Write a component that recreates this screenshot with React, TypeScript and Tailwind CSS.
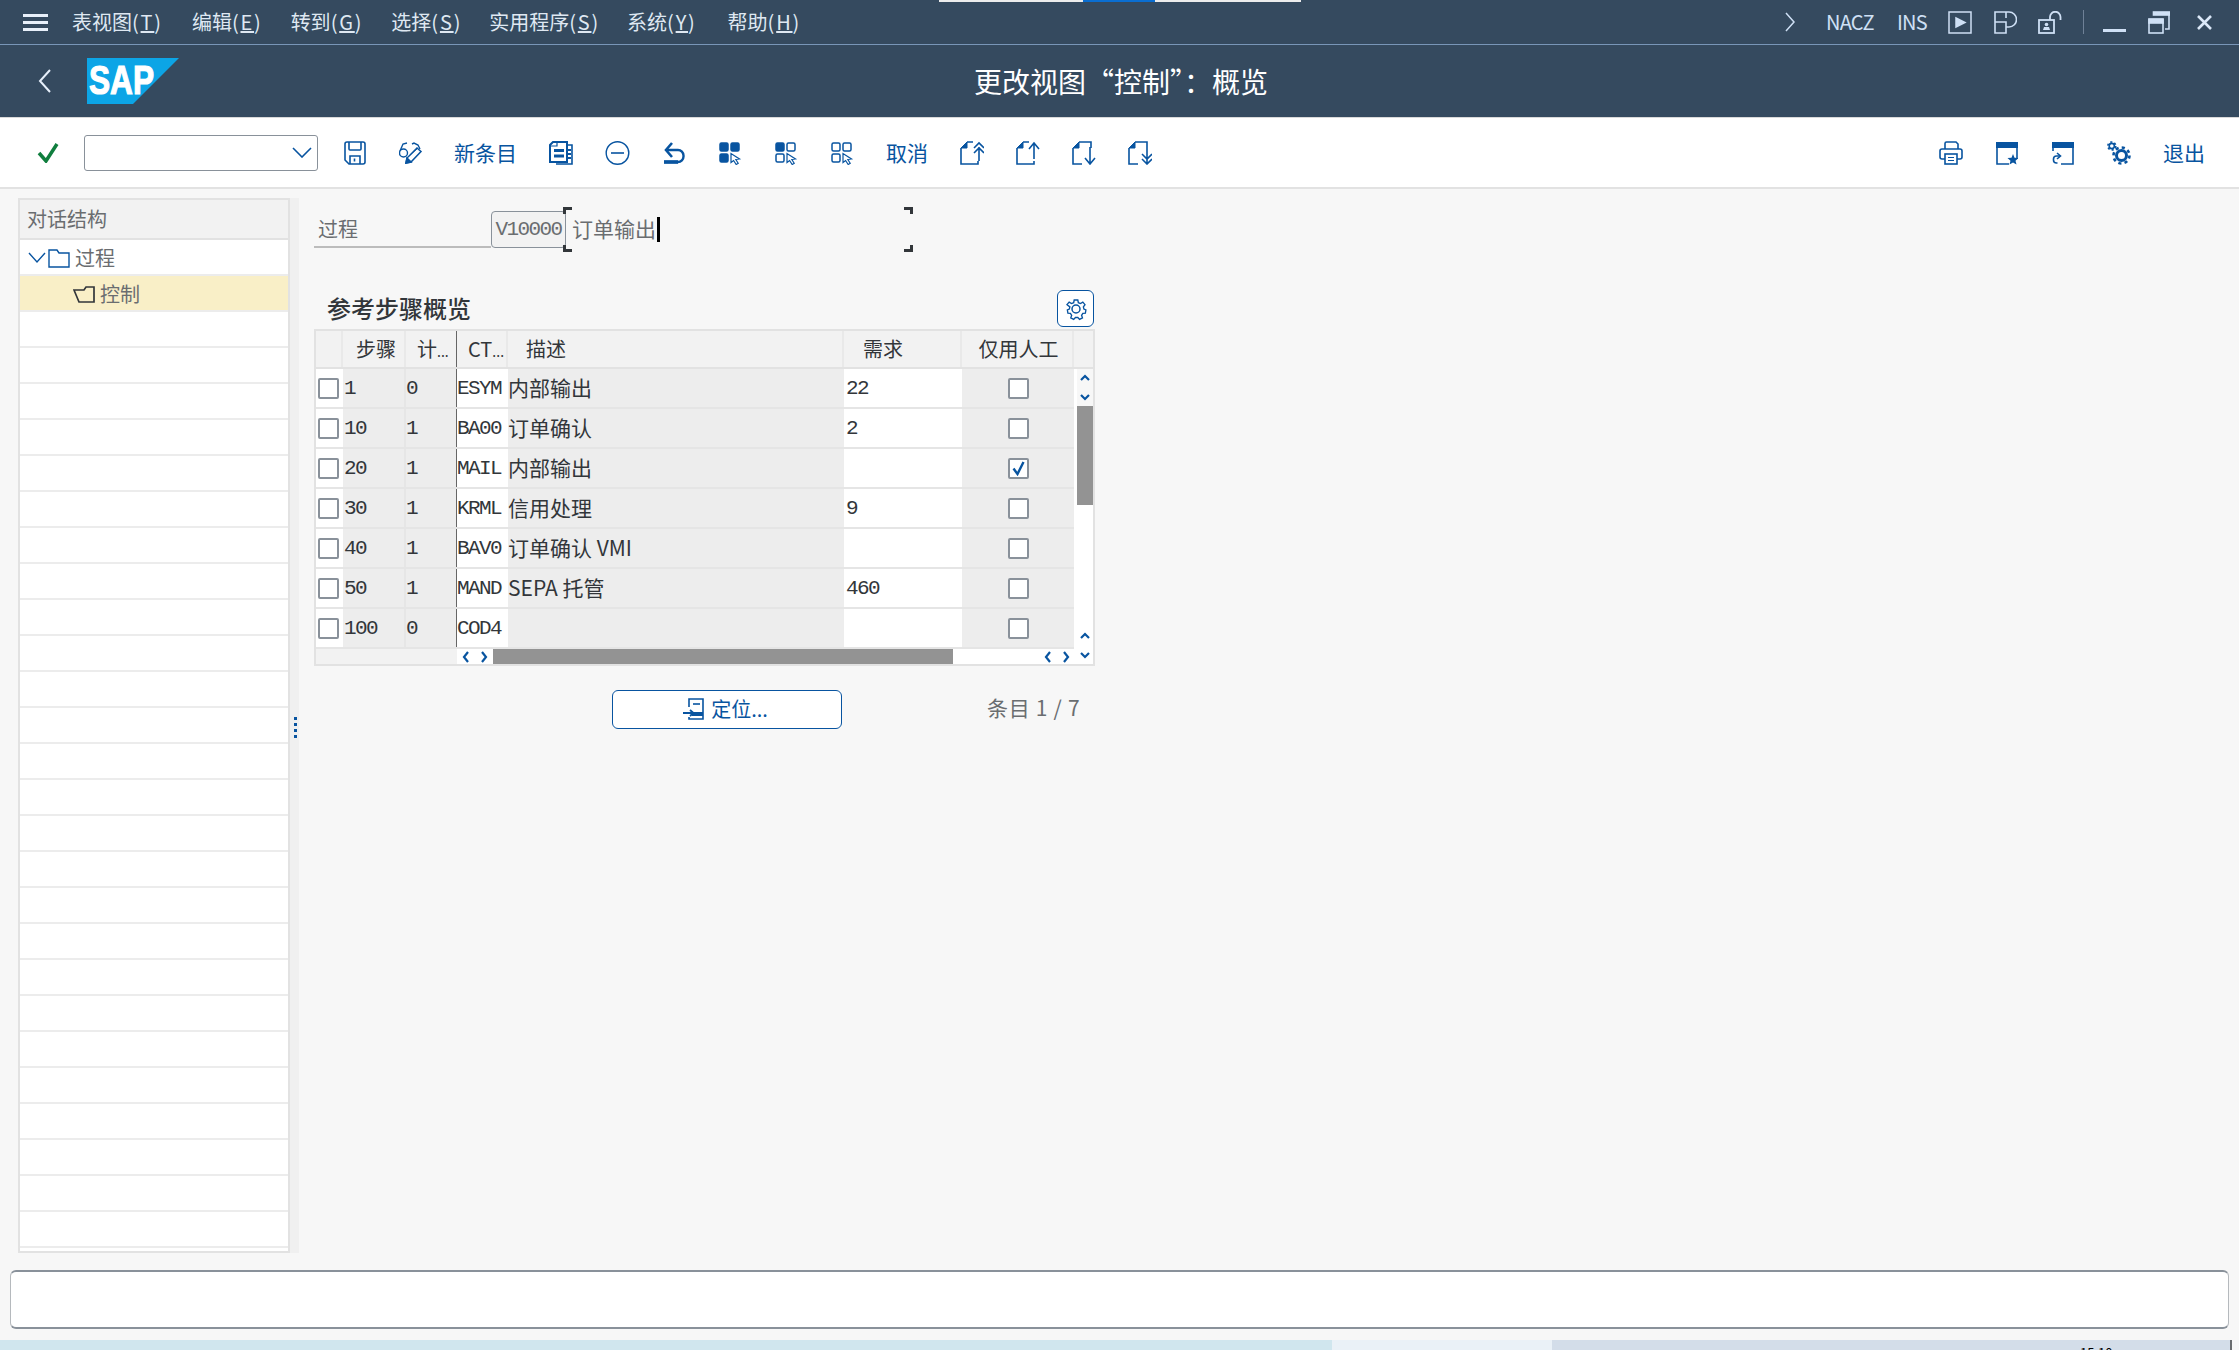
import { ReactNode } from "react";

const cjk = "font-['Noto_Sans_CJK_SC','Noto_Sans',sans-serif]";
const mono = "font-['Liberation_Mono','Noto_Sans_CJK_SC',monospace] text-[21px] tracking-[-1.6px]";

const menus = [
  { label: "表视图", key: "T", cls: "ml-[24px]" },
  { label: "编辑", key: "E", cls: "ml-[29px]" },
  { label: "转到", key: "G", cls: "ml-[28px]" },
  { label: "选择", key: "S", cls: "ml-[28px]" },
  { label: "实用程序", key: "S", cls: "ml-[27px]" },
  { label: "系统", key: "Y", cls: "ml-[27px]" },
  { label: "帮助", key: "H", cls: "ml-[31px]" },
];

const rows = [
  { step: "1", cnt: "0", ct: "ESYM", desc: "内部输出", req: "22", checked: false },
  { step: "10", cnt: "1", ct: "BA00", desc: "订单确认", req: "2", checked: false },
  { step: "20", cnt: "1", ct: "MAIL", desc: "内部输出", req: "", checked: true },
  { step: "30", cnt: "1", ct: "KRML", desc: "信用处理", req: "9", checked: false },
  { step: "40", cnt: "1", ct: "BAV0", desc: "订单确认 VMI", req: "", checked: false },
  { step: "50", cnt: "1", ct: "MAND", desc: "SEPA 托管", req: "460", checked: false },
  { step: "100", cnt: "0", ct: "COD4", desc: "", req: "", checked: false },
];

function Ico({ w = 24, h = 24, className = "", children }: { w?: number; h?: number; className?: string; children: ReactNode }) {
  return (
    <svg width={w} height={h} viewBox={`0 0 ${w} ${h}`} fill="none" stroke="#0854a0" strokeWidth="1.6" className={"shrink-0 " + className}>
      {children}
    </svg>
  );
}

function PageIcon({ kind, className }: { kind: "first" | "prev" | "next" | "last"; className: string }) {
  const up = kind === "first" || kind === "prev";
  return (
    <Ico className={className}>
      <path d="M7 1L1 7h6z" fill="#0854a0" strokeWidth="1" />
      <path d="M1 7v16h1" />
      {up ? <path d="M7 1h6M2 23h16v-3" /> : <path d="M7 1h12v6M2 23h8" />}
      {kind === "first" && <path d="M19 20V6M14 7l5-5 5 5M14 12l5-5 5 5" />}
      {kind === "prev" && <path d="M18 18V3M13 8l5-6 5 6" />}
      {kind === "next" && <path d="M18 6v16M13 17l5 6 5-6" />}
      {kind === "last" && <path d="M19 7v15M14 13l5 5 5-5M14 18l5 5 5-5" />}
    </Ico>
  );
}

function SelectIcon({ fill, className }: { fill: number; className: string }) {
  const cells = [
    [1, 2],
    [12, 2],
    [1, 13],
  ];
  return (
    <Ico w={23} className={className}>
      {cells.map(([x, y], i) => (
        <rect key={i} x={x} y={y} width="8" height="8" rx="1.5" fill={i < fill ? "#0854a0" : "none"} strokeWidth="1.5" />
      ))}
      <path d="M12 12.5v9l2.6-2 2.6 4 2-1.2-2.4-3.8 3.7-.6z" fill="#fff" strokeWidth="1.2" />
    </Ico>
  );
}

function CheckBox({ checked = false }: { checked?: boolean }) {
  return (
    <div className="flex h-[21px] w-[21px] items-center justify-center rounded-[2px] border-2 border-[#89919a] bg-white">
      {checked && (
        <svg width="15" height="15" viewBox="0 0 15 15" fill="none" stroke="#0854a0" strokeWidth="2.4">
          <path d="M2.5 7.5l4 5.5 6-12" />
        </svg>
      )}
    </div>
  );
}

function Chev({ dir, className = "" }: { dir: "up" | "down" | "left" | "right"; className?: string }) {
  const d = { up: "M2 8l4-4 4 4", down: "M2 4l4 4 4-4", left: "M8 1L4 6l4 5", right: "M4 1l4 5-4 5" }[dir];
  return (
    <svg width="12" height="12" viewBox="0 0 12 12" fill="none" stroke="#0854a0" strokeWidth="2.2" className={className}>
      <path d={d} />
    </svg>
  );
}

export default function App() {
  return (
    <div className={"relative flex h-[1350px] w-[2239px] flex-col overflow-hidden bg-[#f7f7f7] text-[#32363a] " + cjk}>
      <div className="absolute left-[939px] top-0 flex h-[2px] w-[362px]">
        <div className="w-[144px] bg-[#ececec]" />
        <div className="w-[72px] bg-[#0a6ed1]" />
        <div className="flex-1 bg-[#ececec]" />
      </div>

      {/* menu bar */}
      <div className="flex h-[45px] items-center border-b border-[#7996b8] bg-[#354a5f] pl-[23px] text-[20px] text-[#dfe8f2]">
        <svg width="25" height="17" viewBox="0 0 25 17" fill="#e8f0fa" className="shrink-0">
          <rect width="25" height="3" />
          <rect y="7" width="25" height="3" />
          <rect y="14" width="25" height="3" />
        </svg>
        {menus.map((m) => (
          <span key={m.label} className={"whitespace-nowrap " + m.cls}>
            {m.label}
            <span className="tracking-[1.8px]">
              (<u>{m.key}</u>)
            </span>
          </span>
        ))}
        <div className="ml-auto flex items-center pr-[27px] text-[#cfe0f5]">
          <svg width="12" height="20" viewBox="0 0 12 20" fill="none" stroke="#cfe0f5" strokeWidth="1.5">
            <path d="M2 1l8 9-8 9" />
          </svg>
          <span className="ml-[30px] w-[49px] text-[20px] tracking-[-0.8px]">NACZ</span>
          <span className="ml-[22px] w-[31px] text-[20px] tracking-[-0.8px]">INS</span>
          <svg width="24" height="23" viewBox="0 0 24 23" fill="none" stroke="#cfe0f5" strokeWidth="1.5" className="ml-[20px]">
            <rect x="1" y="1" width="22" height="21" />
            <path d="M8 7l9 4.5-9 4.5z" fill="#cfe0f5" />
          </svg>
          <svg width="23" height="23" viewBox="0 0 23 23" fill="none" stroke="#cfe0f5" strokeWidth="1.6" className="ml-[22px]">
            <path d="M1 1H15a7.5 7.5 0 0 1 0 15H12V22H1ZM1 11H12V16M12 1V7" />
          </svg>
          <svg width="24" height="23" viewBox="0 0 24 23" fill="none" stroke="#cfe0f5" strokeWidth="1.8" className="ml-[21px]">
            <rect x="1" y="9" width="15" height="13" />
            <path d="M12 9V6a5 5 0 0 1 10.500 0v3" />
            <circle cx="8.500" cy="13.500" r="1.800" fill="#cfe0f5" stroke="none" />
            <path d="M5 19h7l-1-3H6z" fill="#cfe0f5" stroke="none" />
          </svg>
          <div className="ml-[21px] h-[24px] w-px bg-[#6f8197]" />
          <div className="ml-[19px] mt-[17px] h-[3px] w-[23px] bg-[#cfe0f5]" />
          <svg width="22" height="23" viewBox="0 0 22 23" fill="none" stroke="#cfe0f5" strokeWidth="1.6" className="ml-[22px]">
            <rect x="1" y="8.500" width="14" height="13.500" />
            <rect x="1" y="8" width="14" height="4" fill="#cfe0f5" />
            <rect x="5.500" y="1" width="16" height="3" fill="#cfe0f5" />
            <path d="M21 4v14h-4" />
          </svg>
          <svg width="15" height="15" viewBox="0 0 15 15" fill="none" stroke="#dbe8f8" strokeWidth="2.6" className="ml-[27px]">
            <path d="M1 1l13 13M14 1L1 14" />
          </svg>
        </div>
      </div>

      {/* title bar */}
      <div className="grid h-[73px] grid-cols-[1fr_auto_1fr] items-center border-b border-[#d9d9d9] bg-[#354a5f]">
        <div className="flex items-center pl-[38px]">
          <svg width="14" height="24" viewBox="0 0 14 24" fill="none" stroke="#e6effa" strokeWidth="2">
            <path d="M12 1L2 12l10 11" />
          </svg>
          <svg width="92" height="46" viewBox="0 0 92 46" className="ml-[35px]">
            <polygon points="0,0 92,0 46,46 0,46" fill="#0ca5e6" />
            <text x="2" y="36" fill="#fff" stroke="#fff" strokeWidth="1.2" fontFamily="Liberation Sans" fontWeight="700" fontSize="40" textLength="65" lengthAdjust="spacingAndGlyphs">
              SAP
            </text>
          </svg>
        </div>
        <div className="pl-[3px] text-[28px] text-white">更改视图“控制”：概览</div>
        <div />
      </div>

      {/* toolbar */}
      <div className="flex h-[71px] items-center border-b-2 border-[#e2e2e2] bg-white pl-[37px] text-[21px] text-[#0854a0]">
        <svg width="23" height="20" viewBox="0 0 23 20" fill="none" stroke="#107e3e" strokeWidth="3.5" className="shrink-0">
          <path d="M2 10l7 8L20 1" />
        </svg>
        <div className="ml-[24px] flex h-[36px] w-[234px] items-center justify-end rounded-[3px] border border-[#89919a] bg-white pr-[5px]">
          <svg width="20" height="11" viewBox="0 0 20 11" fill="none" stroke="#0854a0" strokeWidth="1.6">
            <path d="M1 1l9 9 9-9" />
          </svg>
        </div>
        <Ico w={22} className="ml-[26px]">
          <path d="M3 1h16a2 2 0 0 1 2 2v18a2 2 0 0 1-2 2H5l-4-4V3a2 2 0 0 1 2-2z" />
          <path d="M5 1v7a1 1 0 0 0 1 1h10a1 1 0 0 0 1-1V1M6 23v-8h10v8" />
          <path d="M10.500 17.500v3" />
        </Ico>
        <Ico className="ml-[33px]">
          <circle cx="4.500" cy="12" r="4" strokeWidth="1.4" />
          <path d="M1 10l3-7 4-1M13 3l2-1 4 2 2 4" strokeWidth="1.4" />
          <path d="M7 22l1-5L18 7l4 3.500L12 21z" strokeWidth="1.5" />
          <path d="M7 22l1-5 4 4z" fill="#0854a0" />
          <path d="M10 15l9-8" strokeWidth="1" />
        </Ico>
        <span className="ml-[31px] whitespace-nowrap">新条目</span>
        <Ico className="ml-[32px]">
          <path d="M8 1H4L1 4v17h17V1z" strokeWidth="2" />
          <path d="M8 1v4H1" strokeWidth="1.2" />
          <path d="M18 4h5v19H7" strokeWidth="1.6" />
          <rect x="5" y="8" width="10" height="3" fill="#0854a0" stroke="none" />
          <rect x="5" y="13.500" width="10" height="3" fill="#0854a0" stroke="none" />
          <rect x="19" y="8" width="3" height="2" fill="#0854a0" stroke="none" />
          <rect x="19" y="12" width="3" height="2" fill="#0854a0" stroke="none" />
          <rect x="19" y="16" width="3" height="2" fill="#0854a0" stroke="none" />
        </Ico>
        <Ico w={25} className="ml-[32px]">
          <circle cx="12.500" cy="12" r="11.300" strokeWidth="1.4" />
          <path d="M6 12h13" />
        </Ico>
        <Ico w={23} className="ml-[33px]">
          <path d="M9 2L3 9l6 7" strokeWidth="2.6" />
          <path d="M3 9h12a5.500 5.500 0 0 1 5.500 5.500v1A5.500 5.500 0 0 1 15 21H1" strokeWidth="2.4" />
          <path d="M1 21h14" strokeWidth="3.6" />
        </Ico>
        <SelectIcon fill={3} className="ml-[33px]" />
        <SelectIcon fill={1} className="ml-[33px]" />
        <SelectIcon fill={0} className="ml-[33px]" />
        <span className="ml-[32px] whitespace-nowrap">取消</span>
        <PageIcon kind="first" className="ml-[32px]" />
        <PageIcon kind="prev" className="ml-[32px]" />
        <PageIcon kind="next" className="ml-[32px]" />
        <PageIcon kind="last" className="ml-[32px]" />

        <Ico className="ml-auto">
          <path d="M6 8V2.500A1.500 1.500 0 0 1 7.500 1H17l2 2v5" />
          <path d="M6 18H3a2 2 0 0 1-2-2V10a2 2 0 0 1 2-2h18a2 2 0 0 1 2 2v6a2 2 0 0 1-2 2h-3" />
          <rect x="6" y="13" width="12" height="10" />
          <path d="M9 16.500h6M9 19.500h6" strokeWidth="1.2" />
        </Ico>
        <Ico w={22} className="ml-[33px]">
          <rect x="0" y="1" width="22" height="6" fill="#0854a0" stroke="none" />
          <path d="M1 6v17h12M21 6v12" />
          <path d="M17 13l1.500 3.800 4 .3-3 2.600 1 3.900-3.500-2.100-3.500 2.100 1-3.900-3-2.600 4-.3z" fill="#0854a0" stroke="none" />
        </Ico>
        <Ico w={22} className="ml-[34px]">
          <rect x="0" y="1" width="22" height="6" fill="#0854a0" stroke="none" />
          <path d="M1 6v4M21 6v17H9" />
          <path d="M8 15H4.500a3 3 0 0 0-3 3v1a3 3 0 0 0 3 3h1" />
          <path d="M5 12l3.500 3L5 18" />
        </Ico>
        <Ico className="ml-[33px]">
          <circle cx="14.500" cy="14.500" r="5" strokeWidth="3" />
          <circle cx="14.500" cy="14.500" r="8" strokeWidth="2.600" strokeDasharray="3.140 3.140" />
          <circle cx="4.800" cy="5" r="2.600" strokeWidth="1.600" />
          <circle cx="4.800" cy="5" r="4" strokeWidth="1.600" strokeDasharray="2.100 2.100" />
        </Ico>
        <span className="ml-[32px] mr-[34px] whitespace-nowrap">退出</span>
      </div>

      {/* content */}
      <div className="flex h-[1081px] shrink-0 pl-[18px] pt-[9px] text-[20px]">
        <div className="h-[1055px] w-[272px] shrink-0 overflow-hidden border-x-2 border-b-2 border-[#e2e2e2] bg-white">
          <div className="flex h-[42px] items-center border-y-2 border-[#e2e2e2] bg-[#f2f2f2] pl-[7px] text-[#6a6d70]">对话结构</div>
          <div className="flex h-[36px] items-center border-b-2 border-[#ececec] pl-[8px] pt-[2px] text-[#6a6d70]">
            <svg width="18" height="12" viewBox="0 0 18 12" fill="none" stroke="#0854a0" strokeWidth="1.4">
              <path d="M1 1l8 9 8-9" />
            </svg>
            <svg width="22" height="19" viewBox="0 0 22 19" fill="none" stroke="#0854a0" strokeWidth="1.4" className="ml-[2px]">
              <path d="M1 1h8l2 3h10v14H1z" />
            </svg>
            <span className="ml-[5px]">过程</span>
          </div>
          <div className="flex h-[36px] items-center border-b-2 border-[#ececec] bg-[#f9efc7] pl-[53px] pt-[2px] text-[#6a6d70]">
            <svg width="22" height="18" viewBox="0 0 22 18" fill="none" stroke="#32363a" strokeWidth="1.7">
              <path d="M6 17h15V2h-8l-2 3H1zM6 17L1 5" />
            </svg>
            <span className="ml-[5px]">控制</span>
          </div>
          {Array.from({ length: 26 }, (_, i) => (
            <div key={i} className="h-[36px] border-b-2 border-[#ececec]" />
          ))}
        </div>
        <div className="relative h-[1055px] w-[9px] shrink-0 bg-[#f0f0f0]">
          <div className="absolute left-[4px] top-[519px] flex flex-col gap-[3px]">
            {[0, 1, 2, 3].map((i) => (
              <div key={i} className="h-[3px] w-[3px] bg-[#0854a0]" />
            ))}
          </div>
        </div>

        <div className="flex flex-col pl-[15px] pt-[13px]">
          <div className="relative flex h-[37px] items-stretch">
            <div className="flex w-[177px] items-center border-b-2 border-[#bcbcbc] pl-[4px] text-[#6a6d70]">过程</div>
            <div className={"flex w-[75px] items-center justify-center rounded-[4px] border border-[#89919a] bg-[#f2f2f2] pt-[1px] text-[#6a6d70] " + mono}>V10000</div>
            <div className="ml-[6px] flex items-center pb-[1px] text-[21px] text-[#6a6d70]">
              订单输出
              <div className="ml-[1px] h-[25px] w-[3px] bg-black" />
            </div>
            <div className="absolute -top-[4px] left-[249px] h-[7px] w-[9px] border-l-[3px] border-t-[3px] border-[#32363a]" />
            <div className="absolute -bottom-[4px] left-[249px] h-[7px] w-[9px] border-b-[3px] border-l-[3px] border-[#32363a]" />
            <div className="absolute -top-[4px] left-[590px] h-[7px] w-[9px] border-r-[3px] border-t-[3px] border-[#32363a]" />
            <div className="absolute -bottom-[4px] left-[590px] h-[7px] w-[9px] border-b-[3px] border-r-[3px] border-[#32363a]" />
          </div>

          <div className="mt-[42px] flex h-[37px] w-[780px] items-center justify-between pl-[13px]">
            <span className="pb-[2px] text-[24px] font-medium">参考步骤概览</span>
            <div className="flex h-[37px] w-[37px] items-center justify-center rounded-[6px] border border-[#0854a0] bg-white">
              <svg width="24" height="24" viewBox="0 0 24 24" fill="none" stroke="#0854a0" strokeWidth="1.5">
                <path d="M10 2h4l.6 3 2.4 1 2.6-1.600 2.400 2.800-1.800 2.400.6 2.400 2.200 1-.6 3.600-2.800.2-1.400 2.200 1 2.800-3.200 1.800-2-2.200h-2.600l-2 2.200-3.200-1.800 1-2.800-1.400-2.200-2.800-.2-.6-3.600 2.200-1 .6-2.400L2 7.200l2.400-2.800L7 6l2.400-1z" transform="translate(1.200 1.200) scale(.9)" />
                <circle cx="12" cy="12" r="4" />
              </svg>
            </div>
          </div>

          <div className="mt-[2px] flex w-[781px] flex-col border-x-2 border-b-2 border-t-2 border-[#e2e2e2]">
            <div className="grid h-[36px] grid-cols-[27px_63px_51px_51px_336px_118px_112px_19px] items-center bg-[#f2f2f2] text-center">
              <div className="h-full border-r-2 border-[#e9e9e9]" />
              <div className="flex h-full items-center border-r-2 border-[#e9e9e9] pl-[13px]">步骤</div>
              <div className="flex h-full items-center border-r border-[#666] pl-[11px] whitespace-nowrap">
                计<span className="self-end pb-[5px] text-[14px]">...</span>
              </div>
              <div className="flex h-full items-center border-r-2 border-[#e9e9e9] pl-[11px] whitespace-nowrap">
                CT<span className="self-end pb-[5px] text-[14px]">...</span>
              </div>
              <div className="flex h-full items-center border-r-2 border-[#e9e9e9] pl-[18px]">描述</div>
              <div className="flex h-full items-center border-r-2 border-[#e9e9e9] pl-[19px]">需求</div>
              <div className="flex h-full items-center justify-center border-r-2 border-[#e9e9e9] pl-[3px]">仅用人工</div>
              <div />
            </div>
            <div className="flex border-t-2 border-[#e2e2e2]">
              <div className="flex w-[758px] flex-col">
                {rows.map((r) => (
                  <div key={r.step} className="grid h-[40px] grid-cols-[27px_63px_51px_51px_336px_118px_112px] border-b-2 border-[#e5e5e5]">
                    <div className="flex items-center justify-end bg-white pr-[4px]">
                      <CheckBox />
                    </div>
                    <div className={"flex items-center border-r-2 border-[#e6e6e6] bg-[#ededed] pl-[1px] pt-[2px] " + mono}>{r.step}</div>
                    <div className={"flex items-center border-r border-[#666] bg-[#ededed] pt-[2px] " + mono}>{r.cnt}</div>
                    <div className={"flex items-center bg-white pt-[2px] " + mono}>{r.ct}</div>
                    <div className="flex items-center whitespace-nowrap bg-[#ededed] text-[21px]">{r.desc}</div>
                    <div className={"flex items-center bg-white pl-[2px] pt-[2px] " + mono}>{r.req}</div>
                    <div className="flex items-center justify-center bg-[#ededed]">
                      <CheckBox checked={r.checked} />
                    </div>
                  </div>
                ))}
                <div className="flex h-[15px] bg-[#f2f2f2]">
                  <div className="w-[141px]" />
                  <div className="flex w-[36px] items-center justify-around bg-white">
                    <Chev dir="left" />
                    <Chev dir="right" />
                  </div>
                  <div className="w-[460px] bg-[#939393]" />
                  <div className="flex flex-1 items-center justify-end gap-[6px] bg-white pr-[2px]">
                    <Chev dir="left" />
                    <Chev dir="right" />
                  </div>
                </div>
              </div>
              <div className="flex w-[19px] flex-col items-stretch bg-white pl-[3px]">
                <div className="flex h-[37px] flex-col items-center justify-around bg-[#f7f7f7]">
                  <Chev dir="up" />
                  <Chev dir="down" />
                </div>
                <div className="h-[99px] bg-[#939393]" />
                <div className="flex-1" />
                <div className="flex h-[38px] flex-col items-center justify-around">
                  <Chev dir="up" />
                  <Chev dir="down" />
                </div>
              </div>
            </div>
          </div>

          <div className="mt-[24px] flex items-center pl-[298px]">
            <div className="flex h-[39px] w-[230px] items-center justify-center rounded-[6px] border border-[#0854a0] bg-white pb-[1px] text-[#0854a0]">
              <Ico w={23} className="-ml-[3px]">
                <path d="M6 10V2h14v20H6v-2" />
                <rect x="9" y="15" width="11" height="4" fill="#0854a0" stroke="none" />
                <path d="M10 7h7" />
                <path d="M0 16h10M7 13l3.500 3L7 19" strokeWidth="1.800" />
              </Ico>
              <span className="ml-[5px]">定位...</span>
            </div>
            <span className="ml-[144px] whitespace-nowrap pb-[3px] pl-[1px] text-[21px] tracking-[0.7px] text-[#6a6d70]">条目 1 / 7</span>
          </div>
        </div>
      </div>

      {/* message bar */}
      <div className="mx-[10px] h-[59px] shrink-0 rounded-[6px] border-x border-y-2 border-x-[#b5b9bd] border-y-[#89919a] bg-white" />

      {/* status strip */}
      <div className="mt-[11px] flex h-[10px] shrink-0 overflow-hidden">
        <div className="w-[1332px] bg-[#d0e6ee]" />
        <div className="w-[220px] bg-[#eaf1f7]" />
        <div className="w-[678px] overflow-hidden bg-[#d3dde9] pl-[528px] text-[13px] leading-[26px] text-black">15:10</div>
        <div className="w-[2px] bg-[#6a6d70]" />
      </div>
    </div>
  );
}
